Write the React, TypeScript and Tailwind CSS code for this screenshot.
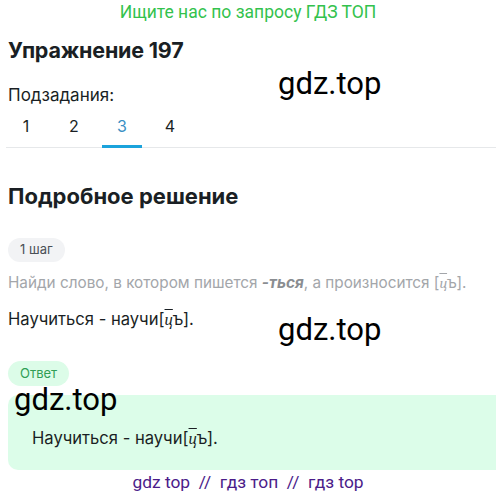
import React from 'react';

const subtasks = ['1', '2', '3', '4'];

function Tsy() {
  return <span className="italic [font-family:'Liberation_Serif',serif] overline">ц</span>;
}

function Watermark({ className }: { className: string }) {
  return (
    <div className={`absolute text-[31px] leading-none text-black [font-family:Roboto,sans-serif] pointer-events-none ${className}`}>
      gdz.top
    </div>
  );
}

export default function App() {
  return (
    <div className="relative w-[496px] h-[496px] overflow-hidden bg-white [font-family:Inter,'Noto_Sans',sans-serif] text-[#1a1f24]">
      {/* Top banner */}
      <div className="text-center text-[17.5px] leading-[24px] text-[#33c24d] [font-family:Roboto,sans-serif]">
        Ищите нас по запросу ГДЗ ТОП
      </div>

      <div className="pl-2">
        <h1 className="mt-[13px] text-[21.5px] leading-[26px] font-bold tracking-[-0.2px]">Упражнение 197</h1>

        <div className="mt-[22px] text-[17px] leading-[20px]">Подзадания:</div>

        {/* Tabs */}
        <div className="mt-[1px] flex gap-2 -ml-[2px] border-b border-[#e6e8ea]">
          {subtasks.map((t) => (
            <div
              key={t}
              className={`w-[40px] h-[42px] flex items-center justify-center text-[16px] border-b-[3px] -mb-px ${
                t === '3' ? 'border-[#1ba3dc] text-[#3a8fc4]' : 'border-transparent text-[#1a1f24]'
              }`}
            >
              {t}
            </div>
          ))}
        </div>

        <h2 className="mt-[34px] text-[22px] leading-[28px] font-bold">Подробное решение</h2>

        <div className="mt-[28px] inline-flex items-center h-[24px] px-[12px] rounded-full bg-[#f2f3f5] text-[13px] text-[#4a5056]">
          1 шаг
        </div>

        <p className="mt-[10px] text-[15.3px] leading-[22px] text-[#a3a6aa]">
          Найди слово, в котором пишется <b className="italic font-bold text-[#8a8d91]">-ться</b>, а произносится [<Tsy />ъ].
        </p>

        <p className="mt-[14px] text-[16.6px] leading-[22px]">
          Научиться - научи[<Tsy />ъ].
        </p>

        <div className="mt-[30px] inline-flex items-center h-[25px] px-[12px] rounded-full bg-[#dcfce8] text-[13px] text-[#2f9e55]">
          Ответ
        </div>

        <div className="mt-[9px] h-[75px] rounded-l-[10px] bg-[#dcfde9] pl-[24px] pt-[32px] text-[16.6px] leading-[22px]">
          Научиться - научи[<Tsy />ъ].
        </div>

        <div className="mt-[2px] text-center pr-2 text-[17.4px] leading-[20px] text-[#4b1c8a] [font-family:Roboto,sans-serif]">
          gdz top&nbsp;&nbsp;//&nbsp;&nbsp;гдз топ&nbsp;&nbsp;//&nbsp;&nbsp;гдз top
        </div>
      </div>

      <Watermark className="left-[278px] top-[68px]" />
      <Watermark className="left-[278px] top-[314px]" />
      <Watermark className="left-[14px] top-[384px]" />
    </div>
  );
}
